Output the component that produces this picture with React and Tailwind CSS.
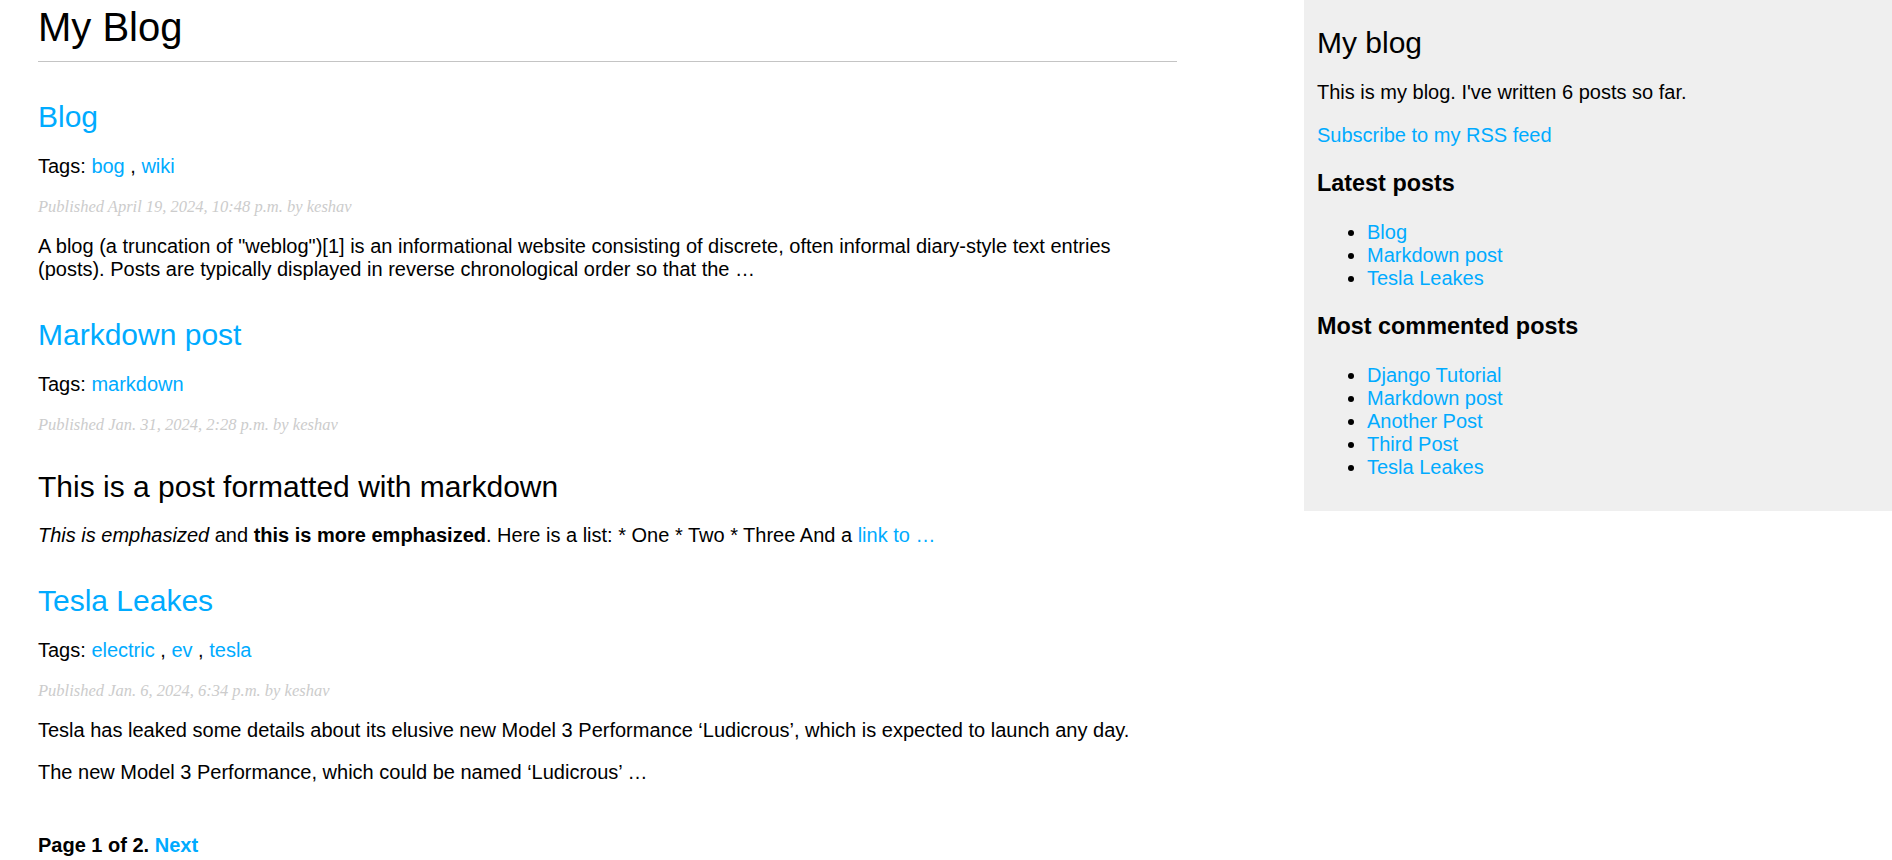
import React from "react";

const latest = ["Blog", "Markdown post", "Tesla Leakes"];
const commented = [
  "Django Tutorial",
  "Markdown post",
  "Another Post",
  "Third Post",
  "Tesla Leakes",
];

const Link = ({ children }) => (
  <a href="#" className="text-[#00abff] no-underline">
    {children}
  </a>
);

const PostTitle = ({ children, first }) => (
  <h2
    className={`${
      first ? "mt-[38px]" : "mt-[37px]"
    } text-[30px] leading-[34px] font-normal`}
  >
    <Link>{children}</Link>
  </h2>
);

const Tags = ({ tags }) => (
  <p className="mt-[21px]">
    Tags:{" "}
    {tags.map((t, i) => (
      <React.Fragment key={t}>
        <Link>{t}</Link>
        {i < tags.length - 1 ? " , " : ""}
      </React.Fragment>
    ))}
  </p>
);

const PostDate = ({ children }) => (
  <p className="mt-[19px] font-['Liberation_Serif',serif] italic text-[16.5px] leading-[19px] text-[#cccccc]">
    Published {children} by keshav
  </p>
);

export default function App() {
  return (
    <div className="min-h-[860px] bg-white font-['Liberation_Sans',Arial,sans-serif] text-[20px] leading-[23px] text-black flex justify-between items-start">
      <main className="w-[1177px] pl-[38px] pb-[6px]">
        <h1 className="mt-[4px] text-[40px] leading-[46px] font-normal pb-[11px] border-b border-[#c4c4c4]">
          My Blog
        </h1>

        <PostTitle first>Blog</PostTitle>
        <Tags tags={["bog", "wiki"]} />
        <PostDate>April 19, 2024, 10:48 p.m.</PostDate>
        <p className="mt-[19px]">
          A blog (a truncation of "weblog")[1] is an informational website
          consisting of discrete, often informal diary-style text entries
          (posts). Posts are typically displayed in reverse chronological order
          so that the …
        </p>

        <PostTitle>Markdown post</PostTitle>
        <Tags tags={["markdown"]} />
        <PostDate>Jan. 31, 2024, 2:28 p.m.</PostDate>
        <h2 className="mt-[36px] text-[30px] leading-[34px] font-normal">
          This is a post formatted with markdown
        </h2>
        <p className="mt-[20px]">
          <em>This is emphasized</em> and <strong>this is more emphasized</strong>.
          Here is a list: * One * Two * Three And a <Link>link to …</Link>
        </p>

        <PostTitle>Tesla Leakes</PostTitle>
        <Tags tags={["electric", "ev", "tesla"]} />
        <PostDate>Jan. 6, 2024, 6:34 p.m.</PostDate>
        <p className="mt-[19px]">
          Tesla has leaked some details about its elusive new Model 3
          Performance ‘Ludicrous’, which is expected to launch any day.
        </p>
        <p className="mt-[19px]">
          The new Model 3 Performance, which could be named ‘Ludicrous’ …
        </p>

        <p className="mt-[50px] font-bold">
          Page 1 of 2. <Link>Next</Link>
        </p>
      </main>

      <aside className="w-[588px] bg-[#efefef] pl-[13px] pr-[13px] pt-[13px] pb-[32px]">
        <h2 className="mt-[13px] text-[30px] leading-[34px] font-normal">
          My blog
        </h2>
        <p className="mt-[21px]">This is my blog. I've written 6 posts so far.</p>
        <p className="mt-[20px]">
          <Link>Subscribe to my RSS feed</Link>
        </p>
        <h3 className="mt-[23px] text-[23.4px] leading-[27px] font-bold">
          Latest posts
        </h3>
        <ul className="mt-[24px] list-disc pl-[50px]">
          {latest.map((p) => (
            <li key={p}>
              <Link>{p}</Link>
            </li>
          ))}
        </ul>
        <h3 className="mt-[23px] text-[23.4px] leading-[27px] font-bold">
          Most commented posts
        </h3>
        <ul className="mt-[24px] list-disc pl-[50px]">
          {commented.map((p, i) => (
            <li key={i}>
              <Link>{p}</Link>
            </li>
          ))}
        </ul>
      </aside>
    </div>
  );
}
